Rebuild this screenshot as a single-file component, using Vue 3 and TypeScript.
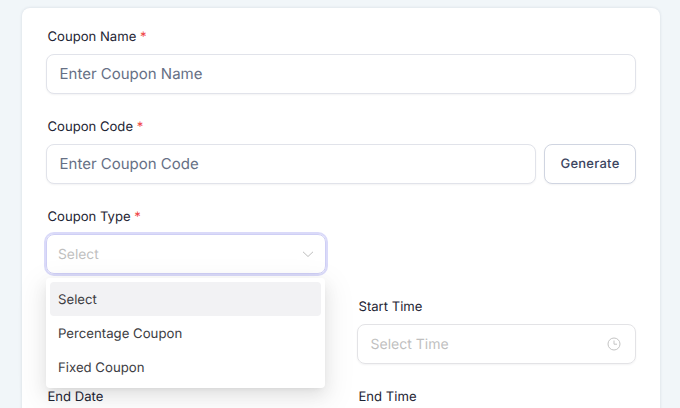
<template>
  <div class="page">
    <form class="card" @submit.prevent>
      <div class="field">
        <label class="label">Coupon Name <span class="req">*</span></label>
        <input class="input" type="text" placeholder="Enter Coupon Name" />
      </div>

      <div class="field">
        <label class="label">Coupon Code <span class="req">*</span></label>
        <div class="code-row">
          <input class="input" type="text" placeholder="Enter Coupon Code" />
          <button type="button" class="generate">Generate</button>
        </div>
      </div>

      <div class="field type-field">
        <label class="label">Coupon Type <span class="req">*</span></label>
        <div class="select">
          <span class="select-value">Select</span>
          <svg class="chevron" width="12" height="12" viewBox="0 0 12 12" fill="none">
            <path d="M1 3.8l5 4.7 5-4.7" stroke="#bdbdbd" stroke-width="1" />
          </svg>
        </div>
        <ul class="menu">
          <li v-for="(option, i) in options" :key="option" class="menu-item" :class="{ active: i === 0 }">
            {{ option }}
          </li>
        </ul>
      </div>

      <div class="grid">
        <div v-for="item in dateFields" :key="item.label" class="field" :class="{ covered: item.covered }">
          <label class="label">{{ item.label }}</label>
          <div class="picker">
            <span class="picker-value">{{ item.placeholder }}</span>
            <svg class="clock" width="14" height="14" viewBox="0 0 14 14" fill="none">
              <circle cx="7" cy="7" r="6" stroke="#c4c4c4" />
              <path d="M7 3.5V7.2h3" stroke="#c4c4c4" />
            </svg>
          </div>
        </div>
      </div>
    </form>
  </div>
</template>

<script setup lang="ts">
const options: string[] = ['Select', 'Percentage Coupon', 'Fixed Coupon']

const dateFields = [
  { label: 'Start Date', placeholder: 'Select Date', covered: true },
  { label: 'Start Time', placeholder: 'Select Time' },
  { label: 'End Date', placeholder: 'Select Date' },
  { label: 'End Time', placeholder: 'Select Time' },
]
</script>

<style>
html,
body {
  margin: 0;
  height: 408px;
  overflow: hidden;
  background: #f1f5f9;
}
</style>

<style scoped>
.page {
  padding: 8px 20px 0 22px;
  font-family: Inter, "Liberation Sans", sans-serif;
  text-rendering: geometricPrecision;
  background: #f1f6f9;
  height: 400px;
  overflow: hidden;
}

.card {
  display: flex;
  flex-direction: column;
  gap: 23px;
  padding: 19px 24px 24px;
  background: #fff;
  border-radius: 8px;
  box-shadow: 0 0 3px rgba(30, 41, 80, 0.14);
}

.field {
  display: flex;
  flex-direction: column;
  min-width: 0;
}

.covered {
  visibility: hidden;
}

.label {
  box-sizing: border-box;
  height: 19px;
  margin: 0 0 8px 1.5px;
  padding-top: 1px;
  font-size: 13.1px;
  font-weight: 400;
  line-height: 19px;
  color: #1d2433;
}

.req {
  color: #ef4444;
}

.input {
  box-sizing: border-box;
  width: 100%;
  height: 40px;
  padding: 0 12.5px 2px;
  border: 1px solid #e1e3ea;
  border-radius: 8px;
  outline: none;
  background: #fff;
  box-shadow: 0 1px 2px rgba(16, 24, 40, 0.05);
  font: 400 15px Inter, "Liberation Sans", sans-serif;
  text-rendering: geometricPrecision;
}

.input::placeholder {
  color: #667085;
  opacity: 1;
}

.code-row {
  display: flex;
  gap: 8px;
}

.generate {
  flex: none;
  width: 92px;
  height: 40px;
  border: 1px solid #d0d5e1;
  border-radius: 8px;
  background: #fff;
  box-shadow: 0 1px 2px rgba(16, 24, 40, 0.05);
  font: 500 13px Inter, "Liberation Sans", sans-serif;
  letter-spacing: 0.25px;
  text-rendering: geometricPrecision;
  color: #3b4560;
}

.type-field {
  position: relative;
  width: 280px;
}

.select {
  box-sizing: border-box;
  display: flex;
  align-items: center;
  justify-content: space-between;
  height: 40px;
  padding: 0 11px;
  border: 1px solid #cfcff5;
  border-radius: 8px;
  box-shadow: 0 0 0 2px #dadaf9;
}

.select-value {
  margin-top: 2px;
  font-size: 13.8px;
  color: #bfbfbf;
}

.menu {
  position: absolute;
  top: 71px;
  left: 0;
  z-index: 2;
  box-sizing: border-box;
  width: 279px;
  margin: 0;
  padding: 4px;
  list-style: none;
  background: #fff;
  border-radius: 4px;
  box-shadow: 0 6px 16px rgba(0, 0, 0, 0.08), 0 3px 6px -4px rgba(0, 0, 0, 0.12), 0 9px 28px 8px rgba(0, 0, 0, 0.05);
}

.menu-item {
  box-sizing: border-box;
  height: 34px;
  padding: 1px 8px 0;
  border-radius: 4px;
  font-size: 13.2px;
  line-height: 34px;
  color: #3d3d43;
}

.menu-item.active {
  background: #f2f2f4;
}

.grid {
  display: grid;
  grid-template-columns: 279px 279px;
  justify-content: space-between;
  row-gap: 23px;
}

.picker {
  box-sizing: border-box;
  display: flex;
  align-items: center;
  justify-content: space-between;
  height: 40px;
  padding: 0 14px 0 12.5px;
  border: 1px solid #e3e3e6;
  border-radius: 8px;
  box-shadow: 0 1px 2px rgba(16, 24, 40, 0.05);
}

.picker-value {
  font-size: 14px;
  color: #bfbfbf;
}
</style>
